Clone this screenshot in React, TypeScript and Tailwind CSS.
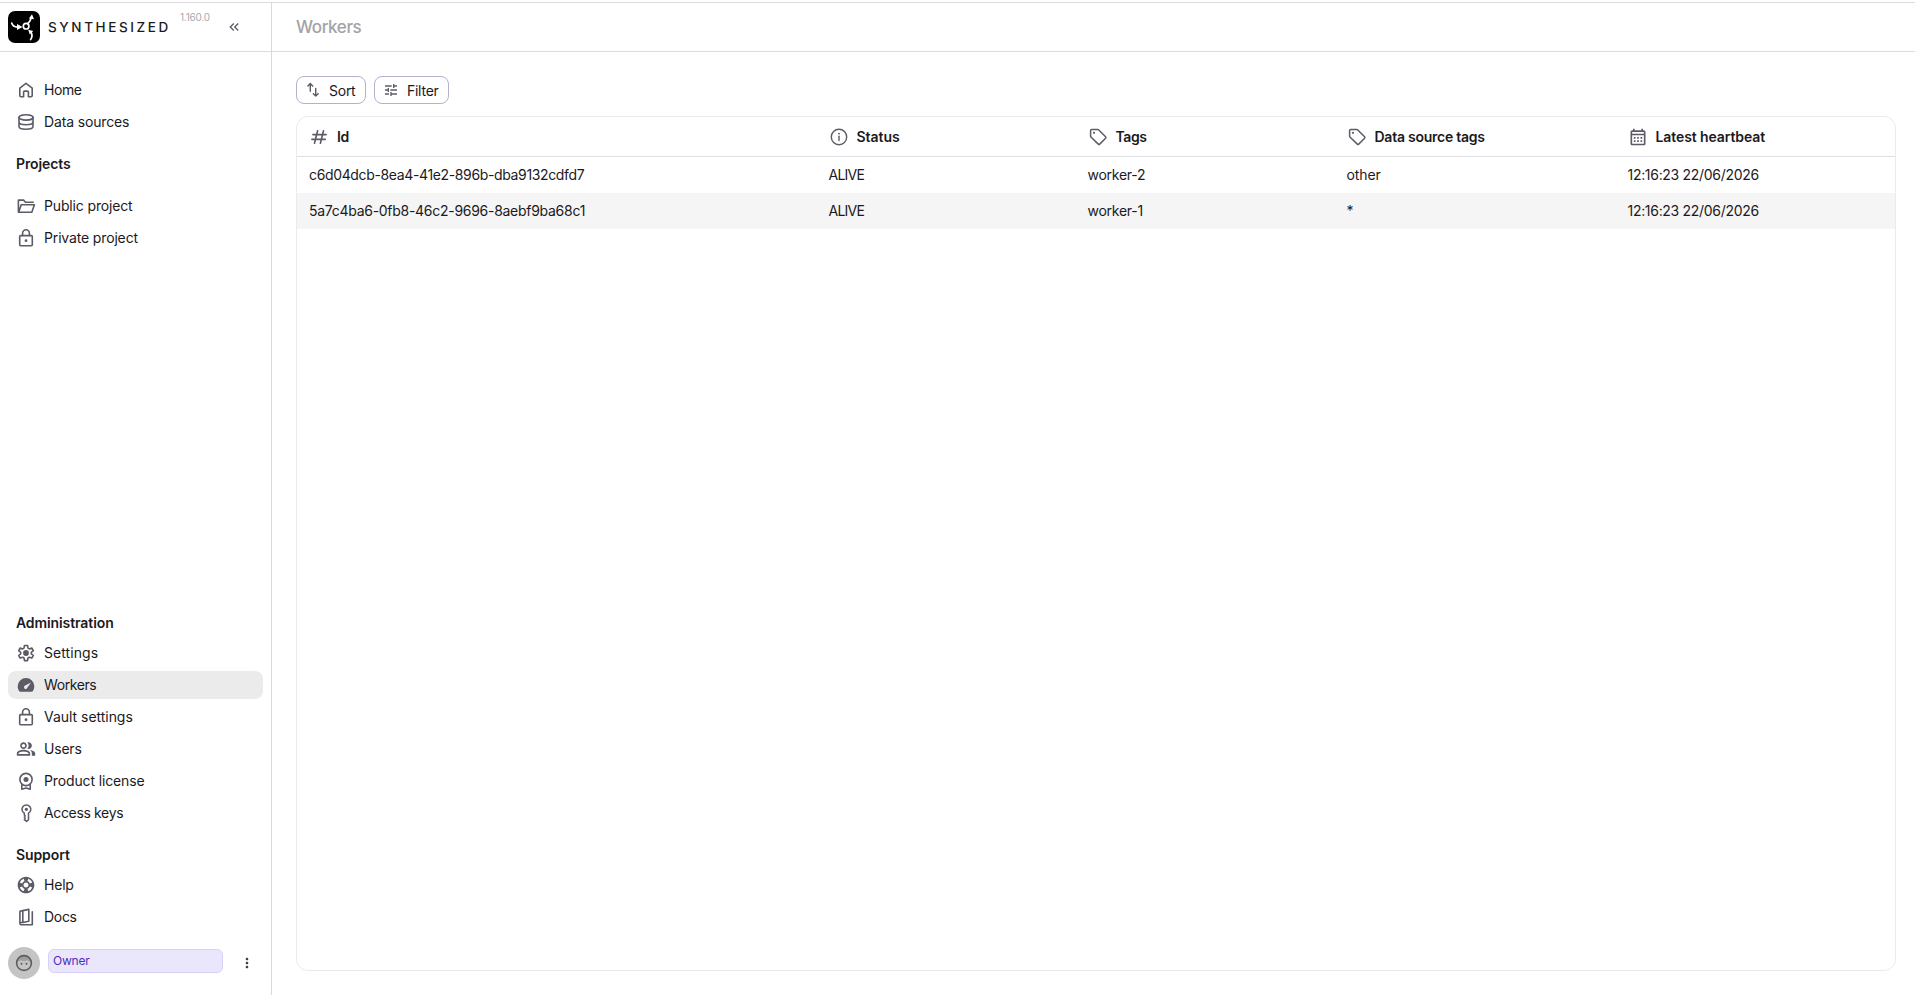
import type { ReactNode } from "react";
import {
  MdKeyboardDoubleArrowLeft,
  MdMoreVert,
  MdOutlineCalendarMonth,
  MdOutlinePeopleAlt,
  MdOutlineSupport,
  MdTune,
} from "react-icons/md";

type NavItem = {
  label: string;
  icon: ReactNode;
  tracking: string;
  active?: boolean;
};

type Column = {
  label: string;
  icon: ReactNode;
  tracking: string;
};

type Worker = {
  id: string;
  idTracking: string;
  status: string;
  tags: string;
  dataSourceTags: string;
  heartbeat: string;
};

interface StrokeIconProps {
  children: ReactNode;
  size?: number;
  width?: number;
}

function StrokeIcon({ children, size = 20, width = 1.6 }: StrokeIconProps) {
  return (
    <svg
      width={size}
      height={size}
      viewBox="0 0 20 20"
      fill="none"
      stroke="currentColor"
      strokeWidth={width}
      strokeLinecap="round"
      strokeLinejoin="round"
    >
      {children}
    </svg>
  );
}

const HomeIcon = () => (
  <StrokeIcon>
    <path d="M3.8 8.1 10 3.4l6.2 4.7v7.4a1.2 1.2 0 0 1-1.2 1.2h-2.6v-4.6a1 1 0 0 0-1-1H8.6a1 1 0 0 0-1 1v4.6H5a1.2 1.2 0 0 1-1.2-1.2z" />
  </StrokeIcon>
);

const DatabaseIcon = () => (
  <StrokeIcon>
    <ellipse cx="10" cy="5.4" rx="7" ry="2.7" />
    <path d="M3 5.4v9.2c0 1.5 3.1 2.7 7 2.7s7-1.2 7-2.7V5.4M3 10c0 1.5 3.1 2.7 7 2.7s7-1.2 7-2.7" />
  </StrokeIcon>
);

const FolderIcon = () => (
  <StrokeIcon>
    <path d="M17.2 6.2H9.4L7.6 4.1H2.4v12.2h13.4l2.6-7.5H5.2L2.8 16" />
  </StrokeIcon>
);

const LockIcon = () => (
  <StrokeIcon>
    <rect x="3.7" y="7.6" width="12.6" height="10.2" rx="1" />
    <path d="M6.6 7.4V5.2a3.4 3.4 0 0 1 6.8 0v2.2" />
    <circle cx="10" cy="12.7" r="1.4" fill="currentColor" stroke="none" />
  </StrokeIcon>
);

const GearIcon = () => (
  <StrokeIcon>
    <path d="M8.5 2.5h3l.5 2.6 1.3.8 2.5-.9 1.5 2.6-2 1.7v1.5l2 1.7-1.5 2.6-2.5-.9-1.3.8-.5 2.6h-3L8 15l-1.3-.8-2.5.9-1.5-2.6 2-1.7V9.3l-2-1.7L4.2 5l2.5.9L8 5.1z" />
    <circle cx="10" cy="10" r="2.9" fill="currentColor" stroke="none" />
  </StrokeIcon>
);

const GaugeIcon = () => (
  <svg width="20" height="20" viewBox="0 0 20 20">
    <path
      d="M10 3a8.3 8.3 0 0 0-8.3 8.3c0 1.8.5 3.3 1.3 4.6.3.5.8.8 1.4.8h11.2c.6 0 1.1-.3 1.4-.8.8-1.3 1.3-2.8 1.3-4.6A8.3 8.3 0 0 0 10 3z"
      fill="currentColor"
    />
    <path d="m15 7.4-3.7 5.4a1.7 1.7 0 1 1-2.1-2.2z" fill="#ebebeb" />
  </svg>
);

const LicenseIcon = () => (
  <StrokeIcon>
    <circle cx="10" cy="8.5" r="6.1" />
    <circle cx="10" cy="8.5" r="2.5" fill="currentColor" stroke="none" />
    <path d="M5.8 13.2v5l4.2-1.3 4.2 1.3v-5" />
  </StrokeIcon>
);

const KeyIcon = () => (
  <StrokeIcon width={1.5}>
    <path d="M8.3 10.2a4.4 4.4 0 1 1 4.2 0v6.5l-1.9 1.8-2.3-1.8.9-1.2-.9-1.2.9-1.2-.9-1z" />
    <circle cx="10.4" cy="6.3" r="1.6" fill="currentColor" stroke="none" />
  </StrokeIcon>
);

const DocsIcon = () => (
  <StrokeIcon>
    <path d="m6.8 3.6 6-1.2v11.8l-6 1.3zM6.8 3.6l-2.9.7v12c0 .8.5 1.4 1.3 1.4h11.1V4.7M6.6 15.5H4.3" />
  </StrokeIcon>
);

const FaceIcon = () => (
  <StrokeIcon>
    <path
      d="M3 8.6a7.2 7.2 0 0 1 14 0c-1.6.2-3-.4-4-1.6-1.4 1.3-4.6 1.3-6 0-1 1.2-2.4 1.8-4 1.6z"
      fill="currentColor"
      fillOpacity=".35"
      stroke="none"
    />
    <circle cx="10" cy="10" r="7.4" />
    <circle cx="7.5" cy="10.8" r="1" fill="currentColor" stroke="none" />
    <circle cx="12.5" cy="10.8" r="1" fill="currentColor" stroke="none" />
  </StrokeIcon>
);

const SortIcon = () => (
  <StrokeIcon size={16} width={1.8}>
    <path d="M6.6 11.5V2M3.6 5l3-3 3 3M13.4 8v9.6M10.4 14.6l3 3 3-3" />
  </StrokeIcon>
);

const HashIcon = () => (
  <StrokeIcon width={1.6}>
    <path d="M8.6 3.8 5.5 16.2M14.5 3.8l-3.1 12.4M3.9 7.6h13.3M2.9 12.4h13.3" />
  </StrokeIcon>
);

const InfoIcon = () => (
  <StrokeIcon width={1.4}>
    <circle cx="10" cy="10" r="7.7" />
    <path d="M10 9.2v4.4" />
    <circle cx="10" cy="6.7" r=".9" fill="currentColor" stroke="none" />
  </StrokeIcon>
);

const TagIcon = () => (
  <StrokeIcon width={1.5}>
    <path d="M2.6 3.4a1 1 0 0 1 1-1h6.2a1 1 0 0 1 .7.3l7.1 7.1a1 1 0 0 1 0 1.4l-5.9 5.9a1 1 0 0 1-1.4 0L2.9 10a1 1 0 0 1-.3-.7z" />
    <circle cx="6" cy="5.8" r="1.1" fill="currentColor" stroke="none" />
  </StrokeIcon>
);

const LogoMark = () => (
  <svg width="32" height="32" viewBox="0 0 32 32" fill="none" className="shrink-0">
    <rect width="32" height="32" rx="7" fill="#000" />
    <g stroke="#fff" strokeWidth="1.7" strokeLinecap="round">
      <circle cx="18.1" cy="15.2" r="2.8" />
      <path d="M3.7 12c.8 2.6 2.8 4 5.6 4.1M19.7 12.6c1.6-1.3 2.7-3 3.3-5M22.6 28.6c1.7-2.6 1.9-5 .4-7.4" />
    </g>
    <path
      d="m9 12.9 5.6 3.2L9 19zM20.9 7.5 24 3.2l2 5.1zM20.2 18.8l5 1.2-3.4 3.4z"
      fill="#fff"
    />
  </svg>
);

const mainItems: NavItem[] = [
  { label: "Home", icon: <HomeIcon />, tracking: "tracking-[-0.4px]" },
  { label: "Data sources", icon: <DatabaseIcon />, tracking: "tracking-[-0.15px]" },
];

const projectItems: NavItem[] = [
  { label: "Public project", icon: <FolderIcon />, tracking: "tracking-[-0.15px]" },
  { label: "Private project", icon: <LockIcon />, tracking: "tracking-[-0.15px]" },
];

const adminItems: NavItem[] = [
  { label: "Settings", icon: <GearIcon />, tracking: "tracking-[0.08px]" },
  {
    label: "Workers",
    icon: <GaugeIcon />,
    tracking: "tracking-[-0.4px]",
    active: true,
  },
  { label: "Vault settings", icon: <LockIcon />, tracking: "tracking-[-0.03px]" },
  {
    label: "Users",
    icon: <MdOutlinePeopleAlt size={20} />,
    tracking: "tracking-[-0.2px]",
  },
  { label: "Product license", icon: <LicenseIcon />, tracking: "tracking-[-0.13px]" },
  { label: "Access keys", icon: <KeyIcon />, tracking: "tracking-[-0.35px]" },
];

const supportItems: NavItem[] = [
  {
    label: "Help",
    icon: <MdOutlineSupport size={20} />,
    tracking: "tracking-[-0.2px]",
  },
  { label: "Docs", icon: <DocsIcon />, tracking: "tracking-[-0.3px]" },
];

const columns: Column[] = [
  { label: "Id", icon: <HashIcon />, tracking: "tracking-[-0.3px]" },
  { label: "Status", icon: <InfoIcon />, tracking: "tracking-[-0.05px]" },
  { label: "Tags", icon: <TagIcon />, tracking: "tracking-[-0.4px]" },
  { label: "Data source tags", icon: <TagIcon />, tracking: "tracking-[-0.25px]" },
  {
    label: "Latest heartbeat",
    icon: <MdOutlineCalendarMonth size={20} />,
    tracking: "tracking-[-0.1px]",
  },
];

const workers: Worker[] = [
  {
    id: "c6d04dcb-8ea4-41e2-896b-dba9132cdfd7",
    idTracking: "tracking-[-0.36px]",
    status: "ALIVE",
    tags: "worker-2",
    dataSourceTags: "other",
    heartbeat: "12:16:23 22/06/2026",
  },
  {
    id: "5a7c4ba6-0fb8-46c2-9696-8aebf9ba68c1",
    idTracking: "tracking-[-0.28px]",
    status: "ALIVE",
    tags: "worker-1",
    dataSourceTags: "*",
    heartbeat: "12:16:23 22/06/2026",
  },
];

const gridCols = "grid grid-cols-[519.5px_259px_259px_281px_1fr]";

function NavList({ items }: { items: NavItem[] }) {
  return (
    <ul className="flex flex-col gap-1">
      {items.map((item) => (
        <li
          key={item.label}
          className={`flex h-7 items-center gap-2 rounded-lg px-2 ${item.active ? "bg-[#ebebeb]" : ""}`}
        >
          <span className="flex size-5 shrink-0 items-center justify-center text-[#5d5b66]">
            {item.icon}
          </span>
          <span className={`whitespace-nowrap ${item.tracking}`}>{item.label}</span>
        </li>
      ))}
    </ul>
  );
}

function NavHeading({ children }: { children: ReactNode }) {
  return (
    <h2 className="flex h-7 items-center px-2 font-semibold tracking-[-0.1px]">
      {children}
    </h2>
  );
}

function Sidebar() {
  return (
    <aside className="flex w-[272px] shrink-0 flex-col border-r border-[#d9d7e6]">
      <div className="flex h-[49px] shrink-0 items-center border-b border-[#dcdbe2] pl-2">
        <LogoMark />
        <span className="ml-2 w-[126px] whitespace-nowrap text-[13.5px] font-medium tracking-[2.6px]">
          SYNTHESIZED
        </span>
        <span className="ml-1.5 w-[46px] self-start pt-[6px] text-[10px] leading-4 tracking-[-0.2px] text-[#a9a9ad]">
          1.160.0
        </span>
        <MdKeyboardDoubleArrowLeft size={16} className="text-[#5d5b66]" />
      </div>
      <nav className="flex flex-1 flex-col px-2">
        <div className="pt-6">
          <NavList items={mainItems} />
        </div>
        <div className="pt-3.5">
          <NavHeading>Projects</NavHeading>
          <div className="pt-3.5">
            <NavList items={projectItems} />
          </div>
        </div>
        <div className="mt-auto">
          <NavHeading>Administration</NavHeading>
          <div className="pt-0.5">
            <NavList items={adminItems} />
          </div>
        </div>
        <div className="pt-3.5">
          <NavHeading>Support</NavHeading>
          <div className="pt-0.5">
            <NavList items={supportItems} />
          </div>
        </div>
      </nav>
      <div className="flex h-16 shrink-0 items-center pl-2">
        <span className="flex size-8 items-center justify-center rounded-full bg-[#c4c4c4] text-[#5d5b60]">
          <FaceIcon />
        </span>
        <span className="mb-1 ml-2 flex h-6 w-[175px] items-center rounded-md border border-[#d8cffa] bg-[#eae6fc] px-1 text-[12px] tracking-[-0.2px] text-[#4b2fc0]">
          Owner
        </span>
        <MdMoreVert size={16} className="ml-4 text-[#3f3d47]" />
      </div>
    </aside>
  );
}

function ToolbarButton({ icon, children }: { icon: ReactNode; children: ReactNode }) {
  return (
    <button className="flex h-7 items-center gap-2 rounded-lg border border-[#b5b0cf] pr-[9.5px] pl-2 tracking-[-0.25px]">
      <span className="text-[#5d5b66]">{icon}</span>
      <span className="pt-0.5">{children}</span>
    </button>
  );
}

function WorkersTable() {
  return (
    <div className="flex-1 overflow-hidden rounded-xl border border-[#ebebeb]">
      <div className={`${gridCols} h-10 border-b border-[#dfdfe3]`}>
        {columns.map((column) => (
          <div
            key={column.label}
            className="flex items-center gap-2 pl-3 font-semibold"
          >
            <span className="flex size-5 items-center justify-center text-[#5d5b66]">
              {column.icon}
            </span>
            <span className={column.tracking}>{column.label}</span>
          </div>
        ))}
      </div>
      {workers.map((worker) => (
        <div
          key={worker.id}
          className={`${gridCols} h-9 items-center even:bg-white odd:bg-[#f5f5f5] *:pl-3`}
        >
          <div className={worker.idTracking}>{worker.id}</div>
          <div className="tracking-[-0.75px]">{worker.status}</div>
          <div className="tracking-[-0.25px]">{worker.tags}</div>
          <div className="tracking-[-0.1px]">{worker.dataSourceTags}</div>
          <div className="tracking-[-0.3px]">{worker.heartbeat}</div>
        </div>
      ))}
    </div>
  );
}

export default function App() {
  return (
    <div className="flex h-screen border-t border-white bg-white pt-px font-['Inter',sans-serif] text-[14px] leading-5 text-[#1b1a22]">
      <div className="flex flex-1 border-t border-[#dcdbe2]">
        <Sidebar />
        <main className="flex flex-1 flex-col">
          <header className="flex h-[49px] shrink-0 items-center border-b border-[#dcdbe2] pl-6">
            <h1 className="text-[17px] font-medium tracking-[-0.4px] text-[#a3a3a6]">
              Workers
            </h1>
          </header>
          <section className="flex flex-1 flex-col gap-3 pt-6 pr-[19px] pb-6 pl-6">
            <div className="flex gap-2">
              <ToolbarButton icon={<SortIcon />}>Sort</ToolbarButton>
              <ToolbarButton icon={<MdTune size={16} />}>Filter</ToolbarButton>
            </div>
            <WorkersTable />
          </section>
        </main>
      </div>
    </div>
  );
}
